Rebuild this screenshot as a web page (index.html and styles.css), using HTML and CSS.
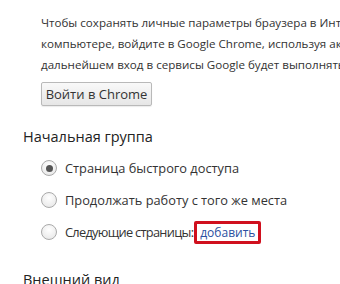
FILE: index.html
```html
<!DOCTYPE html>
<html lang="ru">
<head>
<meta charset="utf-8">
<link rel="stylesheet" href="styles.css">
</head>
<body>
<div class="page">
  <div class="signin">
    <p class="intro">Чтобы сохранять личные параметры браузера в Интернете и получать к ним доступ с любого<br>компьютере, войдите в Google Chrome, используя аккаунт Google. После этого при<br>дальнейшем вход в сервисы Google будет выполняться автоматически.</p>
    <button class="btn">Войти в Chrome</button>
  </div>
  <section class="group">
    <h3 class="title">Начальная группа</h3>
    <div class="options">
      <label class="radio"><span class="dot checked"></span><span>Страница быстрого доступа</span></label>
      <label class="radio"><span class="dot"></span><span>Продолжать работу с того же места</span></label>
      <label class="radio"><span class="dot"></span><span class="tight">Следующие страницы:</span><span class="hl"><a class="link" href="#">добавить</a></span></label>
    </div>
  </section>
  <section class="group">
    <h3 class="title">Внешний вид</h3>
  </section>
</div>
</body>
</html>
```
FILE: styles.css
```css
html, body {
  margin: 0;
  padding: 0;
  background: #fff;
  overflow: hidden;
}
.page {
  width: 340px;
  height: 284px;
  overflow: hidden;
  font-family: "Open Sans", "Noto Sans", sans-serif;
  color: #333;
  white-space: nowrap;
}
.signin {
  padding: 12px 0 0 41px;
}
.intro {
  margin: 0;
  font-size: 11.6px;
  line-height: 21px;
}
.btn {
  margin-top: 7px;
  height: 24px;
  width: 111px;
  padding: 0;
  font-family: inherit;
  font-size: 13px;
  color: #333;
  border: 1px solid #b9b9b9;
  border-radius: 2px;
  background: linear-gradient(#f9f9f9, #e6e6e6);
  box-shadow: 0 1px 1px rgba(0,0,0,0.08);
}
.group {
  padding-left: 23px;
}
.title {
  margin: 0;
  font-weight: normal;
  font-size: 14.5px;
  line-height: 20px;
  color: #222;
  padding-top: 21px;
}
.options {
  margin-top: 5px;
  font-size: 12.8px;
}
.radio {
  display: flex;
  align-items: center;
  height: 32px;
  padding-left: 18px;
}
.tight {
  letter-spacing: -0.7px;
}
.dot {
  width: 14px;
  height: 14px;
  border-radius: 50%;
  border: 1px solid #aaa;
  background: radial-gradient(circle at 50% 35%, #fff, #e4e4e4);
  margin-right: 8px;
  position: relative;
  flex: none;
}
.dot.checked::after {
  content: "";
  position: absolute;
  left: 3.5px;
  top: 3.5px;
  width: 7px;
  height: 7px;
  border-radius: 50%;
  background: #555;
}
.hl {
  box-sizing: border-box;
  height: 23px;
  width: 67px;
  display: flex;
  align-items: center;
  justify-content: center;
  border: 3px solid #d0101e;
  margin-left: 1px;
  border-radius: 2px;
}
.link {
  font-size: 12px;
  color: #2a4fa0;
  text-decoration: none;
}
.group + .group .title {
  padding-top: 22px;
}
```
